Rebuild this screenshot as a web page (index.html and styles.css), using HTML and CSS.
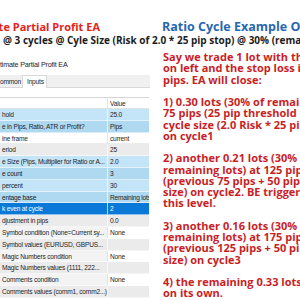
FILE: index.html
```html
<!DOCTYPE html>
<html lang="en">
<head>
    <meta charset="UTF-8">
    <meta name="viewport" content="width=device-width, initial-scale=1.0">
    <title>Ultimate Partial Profit EA - Ratio Cycle Example</title>
    <link rel="stylesheet" href="styles.css">
</head>
<body>
    <div class="page">
        <div class="headline">
            <div class="ea-name"><span>Ultimate Partial Profit EA</span></div>
            <div class="example-title">Ratio Cycle Example Output</div>
        </div>
        <div class="subline">@ 3 cycles @ Cyle Size (Risk of 2.0 * 25 pip stop) @ 30% (remaining lots)</div>

        <div class="main">
            <!-- settings dialog -->
            <div class="dialog">
                <div class="dialog-title">timate Partial Profit EA</div>
                <div class="tabs">
                    <div class="tab">ommon</div>
                    <div class="tab active">Inputs</div>
                </div>
                <div class="tab-body"></div>
                <div class="inputs">
                    <div class="row head"><span></span><span class="val">Value</span></div>
                    <div class="row light"><span>hold</span><span class="val">25.0</span></div>
                    <div class="row mid"><span>e in Pips, Ratio, ATR or Profit?</span><span class="val">Pips</span></div>
                    <div class="row white"><span>ine frame</span><span class="val">current</span></div>
                    <div class="row gray"><span>eriod</span><span class="val">25</span></div>
                    <div class="row light"><span>e Size (Pips, Multiplier for Ratio or A...</span><span class="val">2.0</span></div>
                    <div class="row mid"><span>e count</span><span class="val">3</span></div>
                    <div class="row light"><span>percent</span><span class="val">30</span></div>
                    <div class="row mid"><span>entage base</span><span class="val">Remaining lots</span></div>
                    <div class="row selected"><span>k even at cycle</span><span class="val">2</span></div>
                    <div class="row gray"><span>djustment in pips</span><span class="val">0.0</span></div>
                    <div class="row cond"><span>Symbol condition (None=Current sy...</span><span class="val">None</span></div>
                    <div class="row gray"><span>Symbol values (EURUSD, GBPUS...</span><span class="val"></span></div>
                    <div class="row cond"><span>Magic Numbers condition</span><span class="val">None</span></div>
                    <div class="row gray"><span>Magic Numbers values (1111, 222...</span><span class="val"></span></div>
                    <div class="row cond"><span>Comments condition</span><span class="val">None</span></div>
                    <div class="row gray"><span>Comments values (comm1, comm2...)</span><span class="val"></span></div>
                </div>
            </div>

            <!-- explanation -->
            <div class="notes">
                <p>Say we trade 1 lot with the settings<br>on left and the stop loss is 25<br>pips. EA will close:</p>
                <p>1) 0.30 lots (30% of remaining lots) at<br>75 pips (25 pip threshold + 50 pip<br>cycle size (2.0 Risk * 25 pip stop)<br>on cycle1</p>
                <p>2) another 0.21 lots (30% of<br>remaining lots) at 125 pips<br>(previous 75 pips + 50 pip cycle<br>size) on cycle2. BE triggered at<br>this level.</p>
                <p>3) another 0.16 lots (30% of<br>remaining lots) at 175 pips<br>(previous 125 pips + 50 pip cycle<br>size) on cycle3</p>
                <p>4) the remaining 0.33 lots runs<br>on its own.</p>
            </div>
        </div>
    </div>
</body>
</html>
```

FILE: styles.css
```css
body {
    margin: 0;
    width: 300px;
    height: 300px;
    overflow: hidden;
    background-color: #fff;
    font-family: "Open Sans", "Noto Sans", sans-serif;
}

.page {
    padding-top: 20px;
}

.headline {
    display: flex;
    align-items: baseline;
    height: 14px;
    line-height: 14px;
    font-weight: 700;
    white-space: nowrap;
}

.ea-name {
    flex: none;
    width: 100px;
    display: flex;
    justify-content: flex-end;
    overflow: hidden;
    color: #e4231d;
    font-size: 11px;
}

.example-title {
    margin-left: 62px;
    color: #2866ad;
    font-size: 12.5px;
}

.subline {
    padding-left: 3px;
    font-size: 10px;
    line-height: 12px;
    font-weight: 700;
    color: #1c1c1c;
    white-space: nowrap;
}

.main {
    display: flex;
    gap: 13px;
    margin-top: 6px;
}

/* settings dialog */
.dialog {
    flex: none;
    width: 150px;
    font-family: "Liberation Sans", Arial, sans-serif;
    font-size: 6.6px;
    letter-spacing: -0.2px;
    color: #1e1e1e;
}

.dialog-title {
    height: 23px;
    padding-top: 9px;
    box-sizing: border-box;
    line-height: 8px;
    font-size: 7.2px;
}

.tabs {
    display: flex;
    align-items: flex-end;
    height: 13px;
    box-sizing: border-box;
    background-color: #f0f0f0;
    border-bottom: 1px solid #d9d9d9;
}

.tab {
    width: 22px;
    line-height: 10px;
}

.tab.active {
    width: 25px;
    height: 13px;
    margin-bottom: -1px;
    padding-left: 4px;
    box-sizing: border-box;
    line-height: 11px;
    background-color: #fff;
    border: 1px solid #d9d9d9;
    border-bottom: none;
}

.tab-body {
    height: 9px;
}

.inputs {
    width: 149px;
    border-top: 1px solid #d5d5d5;
}

.row {
    display: grid;
    grid-template-columns: 107px 42px;
    height: 11.8px;
    line-height: 11.8px;
}

.row > span {
    padding-left: 2px;
    overflow: hidden;
    white-space: nowrap;
    border-bottom: 1px solid rgba(255, 255, 255, 0.55);
    box-sizing: border-box;
}

.row .val {
    border-left: 1px solid rgba(255, 255, 255, 0.7);
}

.row.head {
    height: 11px;
    line-height: 11px;
}

.row.head > span {
    border-bottom: 1px solid #e2e2e2;
}

.row.head .val {
    border-left: 1px solid #e2e2e2;
}

.light {
    background-color: #c4e4f7;
}

.mid {
    background-color: #afd8f1;
}

.white {
    background-color: #fff;
}

.white > span {
    border-bottom-color: #ececec !important;
}

.white .val {
    border-left-color: #e6e6e6 !important;
}

.gray {
    background-color: #ebebeb;
}

.selected {
    background-color: #0a78d7;
    color: #fff;
}

.cond > span {
    background-color: #f3f3f3;
}

.cond .val {
    background-color: #fff;
    border-left-color: #e2e2e2;
}

/* explanation text */
.notes {
    flex: 1;
    min-width: 0;
    margin-top: -1px;
    overflow: hidden;
    white-space: nowrap;
    color: #c81e26;
    font-size: 11px;
    line-height: 11.25px;
    font-weight: 700;
}

.notes p {
    margin: 0 0 11.25px;
}
```
